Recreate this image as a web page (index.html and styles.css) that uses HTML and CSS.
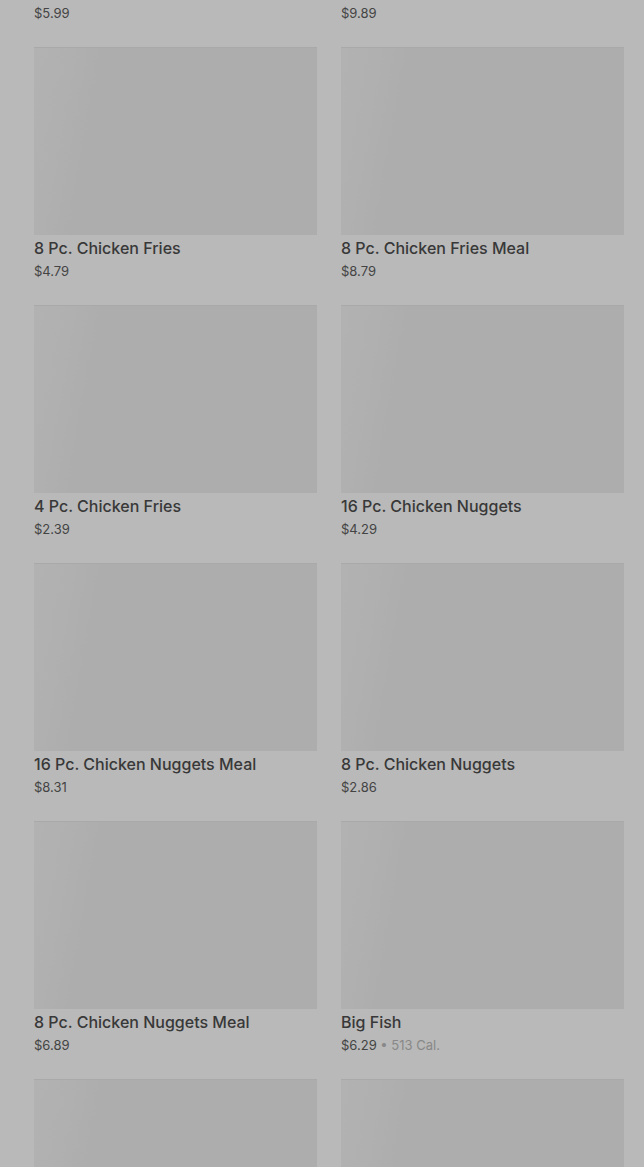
FILE: index.html
```html
<!DOCTYPE html>
<html lang="en">
<head>
<meta charset="UTF-8">
<meta name="viewport" content="width=device-width, initial-scale=1.0">
<title>Menu</title>
<link rel="stylesheet" href="styles.css">
</head>
<body>

<div class="menu">
  <div class="item">
    <div class="thumb"></div>
    <h3>Crispy Chicken Sandwich</h3>
    <p class="price">$5.99</p>
  </div>
  <div class="item">
    <div class="thumb"></div>
    <h3>Crispy Chicken Sandwich Meal</h3>
    <p class="price">$9.89</p>
  </div>

  <div class="item">
    <div class="thumb"></div>
    <h3>8 Pc. Chicken Fries</h3>
    <p class="price">$4.79</p>
  </div>
  <div class="item">
    <div class="thumb"></div>
    <h3>8 Pc. Chicken Fries Meal</h3>
    <p class="price">$8.79</p>
  </div>

  <div class="item">
    <div class="thumb"></div>
    <h3>4 Pc. Chicken Fries</h3>
    <p class="price">$2.39</p>
  </div>
  <div class="item">
    <div class="thumb"></div>
    <h3>16 Pc. Chicken Nuggets</h3>
    <p class="price">$4.29</p>
  </div>

  <div class="item">
    <div class="thumb"></div>
    <h3>16 Pc. Chicken Nuggets Meal</h3>
    <p class="price">$8.31</p>
  </div>
  <div class="item">
    <div class="thumb"></div>
    <h3>8 Pc. Chicken Nuggets</h3>
    <p class="price">$2.86</p>
  </div>

  <div class="item">
    <div class="thumb"></div>
    <h3>8 Pc. Chicken Nuggets Meal</h3>
    <p class="price">$6.89</p>
  </div>
  <div class="item">
    <div class="thumb"></div>
    <h3>Big Fish</h3>
    <p class="price">$6.29 <span class="cal">&bull; 513 Cal.</span></p>
  </div>

  <div class="item">
    <div class="thumb"></div>
    <h3>Big Fish Meal</h3>
    <p class="price">$9.49</p>
  </div>
  <div class="item">
    <div class="thumb"></div>
    <h3>Chicken Jr.</h3>
    <p class="price">$1.99</p>
  </div>
</div>

</body>
</html>
```

FILE: styles.css
```css
body {
  font-family: Inter, "Noto Sans", Arial, sans-serif;
  background-color: #b9b9b9;
  margin: 0;
  padding: 0;
  overflow: hidden;
}

.menu {
  display: grid;
  grid-template-columns: 283px 283px;
  column-gap: 24px;
  row-gap: 24px;
  padding: 0 20px 0 34px;
  margin-top: -211px;
}

.item {
  display: flex;
  flex-direction: column;
}

.thumb {
  height: 188px;
  background: linear-gradient(100deg, #b2b2b2 0%, #b0b0b0 12%, #adadad 22%, #adadad 100%);
  border-top: 1px solid #a9a9a9;
  box-sizing: border-box;
}

.item h3 {
  margin: 2px 0 0;
  font-size: 16px;
  line-height: 22px;
  font-weight: 500;
  color: #383838;
}

.price {
  margin: 2px 0 0;
  font-size: 13px;
  line-height: 20px;
  color: #444;
}

.cal {
  color: #888;
}
```
